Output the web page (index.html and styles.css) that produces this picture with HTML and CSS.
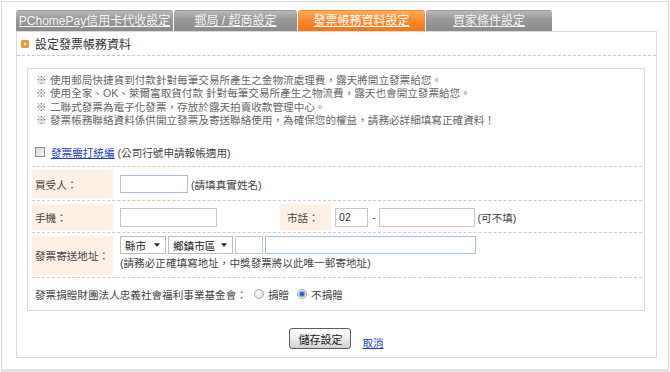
FILE: index.html
```html
<!DOCTYPE html>
<html lang="zh-Hant">
<head>
<meta charset="utf-8">
<title>設定發票帳務資料</title>
<link rel="stylesheet" href="styles.css">
</head>
<body>
<div class="frame">
  <div class="tabs">
    <a class="tab t1" href="#">PChomePay信用卡代收設定</a>
    <a class="tab t2" href="#">郵局 / 超商設定</a>
    <a class="tab t3 active" href="#">發票帳務資料設定</a>
    <a class="tab t4" href="#">買家條件設定</a>
  </div>
  <div class="panel">
    <div class="head">
      <svg class="hicon" viewBox="0 0 8 8" aria-hidden="true"><rect width="8" height="8" rx="1.6" fill="#f39536"/><path d="M3 2.2 L5.6 4 L3 5.8 Z" fill="#fff"/></svg>
      <span>設定發票帳務資料</span>
    </div>
    <div class="box">
      <ul class="notes">
        <li><span class="mark">※</span><span>使用郵局快捷貨到付款針對每筆交易所產生之金物流處理費，露天將開立發票給您。</span></li>
        <li><span class="mark">※</span><span>使用全家、OK、萊爾富取貨付款 針對每筆交易所產生之物流費，露天也會開立發票給您。</span></li>
        <li><span class="mark">※</span><span>二聯式發票為電子化發票，存放於露天拍賣收款管理中心。</span></li>
        <li><span class="mark">※</span><span>發票帳務聯絡資料係供開立發票及寄送聯絡使用，為確保您的權益，請務必詳細填寫正確資料！</span></li>
      </ul>
      <div class="chkrow">
        <input type="checkbox" class="chk">
        <a class="link" href="#">發票需打統編</a><span>&nbsp;(公司行號申請報帳適用)</span>
      </div>
      <div class="frow r1">
        <div class="lbl">買受人：</div>
        <div class="fld"><input class="inp blue w-name" type="text"><span class="hint">(請填真實姓名)</span></div>
      </div>
      <div class="frow r2">
        <div class="lbl">手機：</div>
        <div class="fld"><input class="inp w-mobile" type="text"></div>
        <div class="lbl tel">市話：</div>
        <div class="fld tight"><input class="inp w-area" type="text" value="02"><span class="dash">-</span><input class="inp w-phone" type="text"><span class="hint">(可不填)</span></div>
      </div>
      <div class="frow r3">
        <div class="lbl">發票寄送地址：</div>
        <div class="fld addr">
          <div class="addrline">
            <div class="sel w-city"><span>縣市</span><svg class="arrow" viewBox="0 0 7 4" aria-hidden="true"><path d="M0 0 H7 L3.5 4 Z" fill="#222"/></svg></div>
            <div class="sel w-town"><span>鄉鎮市區</span><svg class="arrow" viewBox="0 0 7 4" aria-hidden="true"><path d="M0 0 H7 L3.5 4 Z" fill="#222"/></svg></div>
            <input class="inp w-zip" type="text">
            <input class="inp blue w-addr" type="text">
          </div>
          <div class="addrnote">(請務必正確填寫地址，中獎發票將以此唯一郵寄地址)</div>
        </div>
      </div>
      <div class="frow r4">
        <span>發票捐贈財團法人忠義社會福利事業基金會：</span>
        <input type="radio" name="donate" class="rad first"><span>捐贈</span>
        <input type="radio" name="donate" class="rad" checked><span>不捐贈</span>
      </div>
    </div>
    <div class="actions">
      <button class="btn" type="button">儲存設定</button>
      <a class="cancel" href="#">取消</a>
    </div>
  </div>
</div>
</body>
</html>
```
FILE: styles.css
```css
* { box-sizing: border-box; }
body {
  margin: 0;
  background: #fff;
  font-family: "Liberation Sans", "Noto Sans CJK TC", sans-serif;
  color: #444;
}
.frame {
  margin: 1px 0 0 1px;
  width: 668px;
  height: 371px;
  border: 1px solid #d9d9d9;
  border-bottom: 3px solid #e3e3e3;
  padding: 8px 0 0 14px;
}
.tabs { display: flex; gap: 1px; height: 21px; }
.tab {
  display: block;
  height: 21px;
  line-height: 21px;
  text-align: center;
  font-size: 12px;
  color: #f4f4f4;
  text-decoration: underline;
  white-space: nowrap;
  overflow: hidden;
  border-radius: 3px 3px 0 0;
  background: linear-gradient(#b9b9b9, #9a9a9a 40%, #8a8a8a);
  border-top: 1px solid #9a9a9a;
}
.t1 { width: 157px; }
.t2 { width: 123px; }
.t3 { width: 127px; }
.t4 { width: 126px; }
.tab.active {
  color: #fff;
  background: linear-gradient(#ffad5e, #fb8a30 45%, #f47516);
  border-top-color: #f38a3a;
}
.panel {
  width: 641px;
  height: 327px;
  border: 1px solid #dcdcdc;
  background: #fff;
}
.head {
  height: 24px;
  border-bottom: 1px dashed #c9c9c9;
  display: flex;
  align-items: center;
  padding-left: 4px;
  font-size: 12px;
  color: #333;
}
.hicon { width: 8px; height: 8px; margin-right: 6px; flex: none; }
.box {
  margin: 12px 0 0 10px;
  width: 618px;
  border: 1px solid #dcdcdc;
  padding: 0 2px 0 4px;
}
.notes {
  list-style: none;
  margin: 0;
  padding: 5px 0 0 4px;
  font-size: 10.6px;
  line-height: 13.3px;
  color: #666;
}
.notes li { display: flex; white-space: nowrap; }
.mark { width: 14px; flex: none; }
.chkrow {
  display: flex;
  align-items: center;
  height: 26px;
  margin-top: 14px;
  padding: 0 0 3px 3px;
  border-bottom: 1px dashed #ccc;
  font-size: 10.6px;
  color: #444;
}
.chk {
  appearance: none;
  -webkit-appearance: none;
  margin: 0 6px 0 0;
  width: 10px;
  height: 10px;
  border: 1px solid #8e8e8e;
  background: linear-gradient(135deg, #d6d6d6, #f6f6f6);
}
.link { color: #1f3fbf; text-decoration: underline; }
.frow {
  display: flex;
  padding: 3px 0 2px;
  border-bottom: 1px dashed #ccc;
  font-size: 10.6px;
  color: #444;
}
.lbl {
  flex: none;
  width: 81px;
  background: #fdf0e4;
  display: flex;
  align-items: center;
  padding-left: 3px;
}
.r1 .lbl { height: 28px; }
.r2 .lbl { height: 26px; }
.r3 .lbl { height: 39px; }
.lbl.tel { width: 51px; margin-left: 63px; padding-left: 7px; }
.fld { display: flex; align-items: center; margin-left: 7px; }
.fld.tight { margin-left: 4px; }
.inp {
  height: 18px;
  margin: 0;
  padding: 0 3px;
  border: 1px solid #c8c8c8;
  background: #fff;
  font: inherit;
  color: #333;
  outline: none;
}
.inp.blue { border-color: #a7c1dc; }
.w-name { width: 68px; }
.w-mobile { width: 97px; height: 19px; }
.w-area { width: 33px; height: 19px; }
.w-phone { width: 96px; height: 19px; }
.w-zip { width: 28px; }
.w-addr { width: 211px; }
.hint { margin-left: 3px; white-space: nowrap; }
.dash { margin: 0 3px 0 4px; }
.addr { flex-direction: column; align-items: flex-start; }
.addrline { display: flex; gap: 2px; }
.sel {
  height: 18px;
  border: 1px solid #bdbdbd;
  background: #fff;
  display: flex;
  align-items: center;
  justify-content: space-between;
  padding: 0 5px 0 4px;
  color: #222;
}
.w-city { width: 46px; }
.w-town { width: 65px; }
.arrow { width: 6px; height: 4px; }
.addrnote { margin-top: 2px; line-height: 14px; white-space: nowrap; }
.frow.r4 {
  border-bottom: none;
  height: 32px;
  padding: 0 0 0 3px;
  align-items: center;
}
.rad {
  appearance: none;
  -webkit-appearance: none;
  width: 10px;
  height: 10px;
  margin: 0 4px 0 8px;
  border-radius: 50%;
  border: 1px solid #a9a9a9;
  background: radial-gradient(circle at 40% 40%, #fff, #dcdcdc);
}
.rad.first { margin-left: 7px; }
.rad:checked {
  background: radial-gradient(circle, #1f4fae 0, #3d74d6 2px, #a8c4ee 3px, #e9e9e9 3.6px);
}
.actions {
  display: flex;
  justify-content: center;
  align-items: flex-end;
  gap: 11px;
  margin-top: 17px;
}
.btn {
  width: 62px;
  height: 21px;
  padding: 0;
  border: 1px solid #5e5e5e;
  border-radius: 3px;
  background: linear-gradient(#ffffff, #ececec 50%, #d2d2d2);
  font: inherit;
  font-size: 11px;
  color: #222;
}
.cancel {
  font-size: 10.6px;
  line-height: 14px;
  color: #1f3fbf;
  text-decoration: underline;
  margin-bottom: -1px;
}
```
